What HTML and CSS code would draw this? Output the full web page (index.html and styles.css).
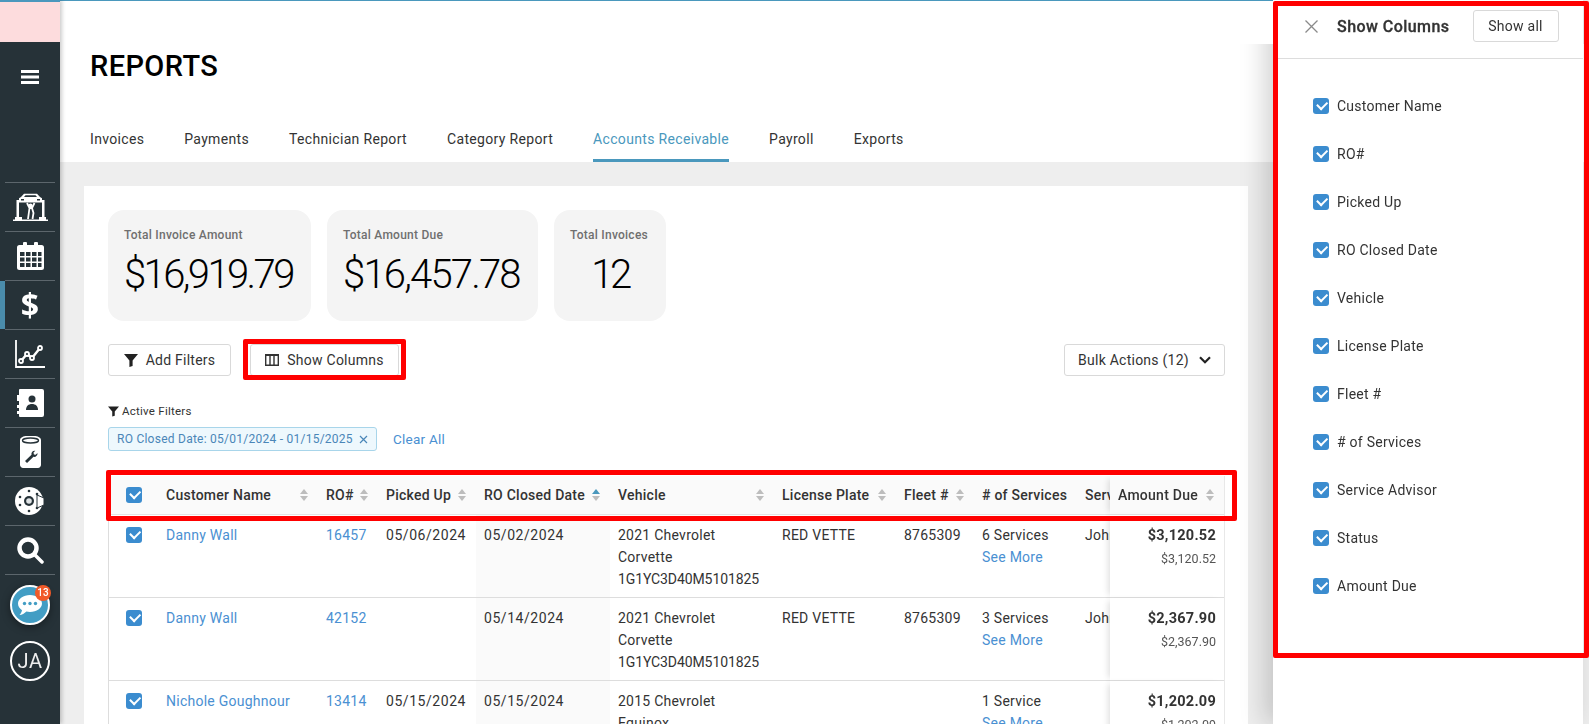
FILE: index.html
```html
<!DOCTYPE html>
<html lang="en">
<head>
<meta charset="utf-8">
<title>Reports</title>
<link rel="stylesheet" href="styles.css">
</head>
<body>
<aside class="sidebar">
  <div class="promo"></div>
  <div class="burger"><svg width="18" height="14" viewBox="0 0 18 14"><path fill="#fff" d="M0 0h18v3H0zM0 5.500h18v3H0zM0 11h18v3H0z"/></svg></div>
  <nav class="rail">
    <a class="rail-item"><svg width="35" height="28" viewBox="0 0 35 28"><path fill="#fff" d="M0 26.500h35V28H0zM2 24h7v2.500H2zM26 24h7v2.500h-7zM3.500 7h2.500v17H3.500zM29 7h2.500v17H29z"/><path fill="#fff" d="M8 4 11 .8h13L27 4l2 1.200V9.500H6V5.200z"/><path fill="#263238" d="M11 4l1.500-1.800h10L24 4zM8 6h3v1.500H8zM24 6h3v1.500h-3z"/><circle cx="17.500" cy="12.500" r="2" fill="#fff"/><path fill="none" stroke="#fff" stroke-width="1.800" d="M14 10l2.500 5h2.500l2.500-5M16.500 15l-1.500 11M19 15l1.500 5-1 6"/></svg></a>
    <a class="rail-item"><svg width="27" height="28" viewBox="0 0 27 28"><path fill="#fff" d="M2.500 3H6V1.500a2 2 0 0 1 4 0V3h7V1.500a2 2 0 0 1 4 0V3h3.500A2.500 2.500 0 0 1 27 5.500v20a2.500 2.500 0 0 1-2.500 2.500h-22A2.500 2.500 0 0 1 0 25.500v-20A2.500 2.500 0 0 1 2.500 3z"/><path fill="#263238" d="M3 10h4.500v4H3zM9 10h4.500v4H9zM15 10h4.500v4H15zM21 10h3.500v4H21zM3 15.500h4.500v4H3zM9 15.500h4.500v4H9zM15 15.500h4.500v4H15zM21 15.500h3.500v4H21zM3 21h4.500v4H3zM9 21h4.500v4H9zM15 21h4.500v4H15zM21 21h3.500v4H21z"/></svg></a>
    <a class="rail-item is-active"><span class="dollar">$</span></a>
    <a class="rail-item"><svg width="30" height="28" viewBox="0 0 30 28"><path fill="none" stroke="#fff" stroke-width="1.800" d="M1 0v27h29"/><path fill="none" stroke="#fff" stroke-width="2.400" d="M6 21l6-7 5 4 8-10"/><g fill="#263238" stroke="#fff" stroke-width="1.800"><circle cx="6" cy="21" r="2"/><circle cx="12" cy="14" r="2"/><circle cx="17" cy="18" r="2"/><circle cx="25" cy="8" r="2"/></g></svg></a>
    <a class="rail-item"><svg width="27" height="28" viewBox="0 0 27 28"><path fill="#fff" d="M3 0h22a2 2 0 0 1 2 2v24a2 2 0 0 1-2 2H3a1 1 0 0 1-1-1v-2H0v-3h2v-3H0v-3h2v-4H0v-3h2V9H0V6h2V1a1 1 0 0 1 1-1z"/><circle cx="15" cy="10" r="3.500" fill="#263238"/><path fill="#263238" d="M9 21c0-4 2.500-6 6-6s6 2 6 6z"/></svg></a>
    <a class="rail-item"><svg width="21" height="32" viewBox="0 0 21 32"><path fill="#fff" d="M0 4c0-6 21-6 21 0v25c0 1.500-1.500 3-3 3H3c-1.500 0-3-1.500-3-3z"/><ellipse cx="10.500" cy="4.500" rx="8" ry="2.500" fill="none" stroke="#263238" stroke-width="1.400"/><path fill="#263238" d="M5 25l6.500-6.200c-.5-2 1-4.300 3.800-4l-1.800 1.800.4 1.800 1.800.4 1.800-1.800c.3 2.800-2 4.300-4 3.800L7 27z"/></svg></a>
    <a class="rail-item"><svg width="30" height="28" viewBox="0 0 30 28"><circle cx="14" cy="14" r="14" fill="#fff"/><circle cx="14" cy="14" r="5" fill="#263238"/><circle cx="14" cy="14" r="2.800" fill="#dfe3e5"/><g fill="#263238"><circle cx="14" cy="4" r="1.300"/><circle cx="14" cy="24" r="1.300"/><circle cx="5" cy="10" r="1.300"/><circle cx="5" cy="18" r="1.300"/><circle cx="22" cy="7" r="1.300"/><circle cx="22" cy="21" r="1.300"/></g><path fill="#fff" stroke="#263238" d="M22 8l7 3v7l-7 3z"/></svg></a>
    <a class="rail-item"><svg width="27" height="27" viewBox="0 0 27 27"><circle cx="11" cy="11" r="8.500" fill="none" stroke="#fff" stroke-width="4.500"/><path stroke="#fff" stroke-width="3.500" stroke-linecap="round" d="M18 18l7 7"/></svg></a>
    <div class="rail-end"></div>
  </nav>
  <button class="chat"><svg width="24" height="21" viewBox="0 0 24 21"><path fill="#fff" d="M12 0c6.600 0 12 3.800 12 8.500S18.600 17 12 17c-1.300 0-2.500-.1-3.600-.4C6.500 18.500 4 20 1.500 20c1.300-1.300 2.200-3 2.500-4.800C1.500 13.600 0 11.200 0 8.500 0 3.800 5.400 0 12 0z"/><g fill="#429dc4"><circle cx="6.500" cy="8.500" r="1.700"/><circle cx="12" cy="8.500" r="1.700"/><circle cx="17.500" cy="8.500" r="1.700"/></g></svg><span class="chat-badge">13</span></button>
  <button class="avatar">JA</button>
</aside>

<main class="main">
  <div class="topbar"></div>
  <header class="page-head">
    <h1 class="page-title">REPORTS</h1>
    <nav class="tabs">
      <a class="tab">Invoices</a>
      <a class="tab">Payments</a>
      <a class="tab">Technician Report</a>
      <a class="tab">Category Report</a>
      <a class="tab is-active">Accounts Receivable</a>
      <a class="tab">Payroll</a>
      <a class="tab">Exports</a>
    </nav>
  </header>

  <section class="content">
    <div class="sheet">
      <div class="stats">
        <div class="stat stat-a"><div class="stat-label">Total Invoice Amount</div><div class="stat-value">$16,919.79</div></div>
        <div class="stat stat-b"><div class="stat-label">Total Amount Due</div><div class="stat-value">$16,457.78</div></div>
        <div class="stat stat-c"><div class="stat-label">Total Invoices</div><div class="stat-value stat-center">12</div></div>
      </div>

      <div class="toolbar">
        <button class="btn btn-filters"><svg class="funnel" width="14" height="13" viewBox="0 0 14 13"><path fill="#222" d="M0 0h14L8.600 6.500V12L5.400 13V6.500z"/></svg>Add Filters</button>
        <button class="btn btn-columns"><svg width="14" height="12" viewBox="0 0 14 12"><path fill="none" stroke="#333" stroke-width="1.400" d="M.7.700h12.600v10.600H.7zM5 .7v10.600M9 .7v10.600"/><path fill="#333" d="M0 0h14v2H0z"/></svg>Show Columns</button>
        <button class="btn btn-bulk">Bulk Actions (12)<svg width="12" height="8" viewBox="0 0 12 8"><path fill="none" stroke="#222" stroke-width="2.200" d="M1 1.200l5 5 5-5"/></svg></button>
      </div>

      <div class="active-label"><svg width="11" height="11" viewBox="0 0 14 13"><path fill="#222" d="M0 0h14L8.600 6.500V12L5.400 13V6.500z"/></svg>Active Filters</div>
      <div class="chips">
        <span class="chip">RO Closed Date: 05/01/2024 - 01/15/2025<svg width="9" height="9" viewBox="0 0 9 9"><path stroke="#4a86b8" stroke-width="1.200" d="M1 1l7 7M8 1L1 8"/></svg></span>
        <a class="clear-all">Clear All</a>
      </div>

      <div class="table-box">
        <div class="table-scroll">
          <table class="grid">
            <colgroup>
              <col class="c-check"><col class="c-name"><col class="c-ro"><col class="c-picked"><col class="c-closed"><col class="c-vehicle"><col class="c-plate"><col class="c-fleet"><col class="c-services"><col class="c-advisor"><col class="c-due">
            </colgroup>
            <thead>
              <tr>
                <th class="cell-check"><input class="cb" type="checkbox" checked></th>
                <th><div class="th-in">Customer Name<i class="sort"></i></div></th>
                <th><div class="th-in">RO#<i class="sort"></i></div></th>
                <th><div class="th-in">Picked Up<i class="sort"></i></div></th>
                <th><div class="th-in">RO Closed Date<i class="sort sort-up"></i></div></th>
                <th><div class="th-in">Vehicle<i class="sort"></i></div></th>
                <th><div class="th-in">License Plate<i class="sort"></i></div></th>
                <th><div class="th-in">Fleet #<i class="sort"></i></div></th>
                <th><div class="th-in">#&nbsp;of&nbsp;Services</div></th>
                <th><div class="th-in">Service&nbsp;Advisor</div></th>
                <th class="sticky"><div class="th-in">Amount Due<i class="sort"></i></div></th>
              </tr>
            </thead>
            <tbody>
              <tr>
                <td class="cell-check"><input class="cb" type="checkbox" checked></td>
                <td><a class="link">Danny Wall</a></td>
                <td><a class="link">16457</a></td>
                <td class="date">05/06/2024</td>
                <td class="date shaded">05/02/2024</td>
                <td>2021 Chevrolet<br>Corvette<br><span class="vin">1G1YC3D40M5101825</span></td>
                <td>RED VETTE</td>
                <td>8765309</td>
                <td>6 Services<br><a class="link">See More</a></td>
                <td>John Smith</td>
                <td class="sticky due"><b>$3,120.52</b><br><small>$3,120.52</small></td>
              </tr>
              <tr>
                <td class="cell-check"><input class="cb" type="checkbox" checked></td>
                <td><a class="link">Danny Wall</a></td>
                <td><a class="link">42152</a></td>
                <td class="date"></td>
                <td class="date shaded">05/14/2024</td>
                <td>2021 Chevrolet<br>Corvette<br><span class="vin">1G1YC3D40M5101825</span></td>
                <td>RED VETTE</td>
                <td>8765309</td>
                <td>3 Services<br><a class="link">See More</a></td>
                <td>John Smith</td>
                <td class="sticky due"><b>$2,367.90</b><br><small>$2,367.90</small></td>
              </tr>
              <tr>
                <td class="cell-check"><input class="cb" type="checkbox" checked></td>
                <td><a class="link">Nichole Goughnour</a></td>
                <td><a class="link">13414</a></td>
                <td class="date">05/15/2024</td>
                <td class="date shaded">05/15/2024</td>
                <td>2015 Chevrolet<br>Equinox<br><span class="vin">2GNALBEK5F6100000</span></td>
                <td></td>
                <td></td>
                <td>1 Service<br><a class="link">See More</a></td>
                <td></td>
                <td class="sticky due"><b>$1,202.09</b><br><small>$1,202.09</small></td>
              </tr>
            </tbody>
          </table>
        </div>
        <div class="mark-head"></div>
      </div>
    </div>
  </section>
</main>

<aside class="drawer">
  <div class="drawer-head">
    <svg class="drawer-x" width="13" height="13" viewBox="0 0 13 13"><path stroke="#8a8a8a" stroke-width="1.300" d="M.5.500l12 12M12.500.500l-12 12"/></svg>
    <h2 class="drawer-title">Show Columns</h2>
    <button class="btn btn-showall">Show all</button>
  </div>
  <ul class="col-list">
    <li><input class="cb" type="checkbox" checked>Customer Name</li>
    <li><input class="cb" type="checkbox" checked>RO#</li>
    <li><input class="cb" type="checkbox" checked>Picked Up</li>
    <li><input class="cb" type="checkbox" checked>RO Closed Date</li>
    <li><input class="cb" type="checkbox" checked>Vehicle</li>
    <li><input class="cb" type="checkbox" checked>License Plate</li>
    <li><input class="cb" type="checkbox" checked>Fleet #</li>
    <li><input class="cb" type="checkbox" checked># of Services</li>
    <li><input class="cb" type="checkbox" checked>Service Advisor</li>
    <li><input class="cb" type="checkbox" checked>Status</li>
    <li><input class="cb" type="checkbox" checked>Amount Due</li>
  </ul>
  <div class="mark-drawer"></div>
</aside>
</body>
</html>
```

FILE: styles.css
```css
* { box-sizing: border-box; }
html, body { height: 724px; margin: 0; overflow: hidden; }
body {
  display: flex;
  position: relative;
  font-family: Roboto, "Liberation Sans", sans-serif;
  font-size: 14px;
  letter-spacing: .25px;
  color: #333;
  background: #eee;
}
a { text-decoration: none; cursor: pointer; }
button { font: inherit; letter-spacing: inherit; color: inherit; cursor: pointer; }

/* sidebar */
.sidebar {
  width: 60px;
  flex: none;
  background: #263238;
  display: flex;
  flex-direction: column;
  align-items: center;
  box-shadow: 2px 0 4px rgba(0,0,0,.2);
  position: relative;
  z-index: 3;
}
.promo { width: 60px; height: 42px; flex: none; background: #fddcdd; border-top: 2px solid #4a98bd; }
.burger { height: 14px; flex: none; margin-top: 28px; display: flex; }
.rail { width: 50px; flex: none; margin-top: 98px; display: flex; flex-direction: column; }
.rail-item {
  height: 49px;
  flex: none;
  border-top: 1px solid #5c666c;
  display: flex;
  align-items: center;
  justify-content: center;
  position: relative;
}
.rail-item.is-active::before {
  content: "";
  position: absolute;
  left: -5px; top: 0; bottom: 0;
  width: 5px;
  background: #4a8cab;
}
.rail-end { border-top: 1px solid #5c666c; }
.dollar {
  font-family: "Open Sans", sans-serif;
  font-weight: 700;
  font-size: 32px;
  line-height: 1;
  color: #fff;
  letter-spacing: 0;
}
.chat {
  width: 40px; height: 40px;
  flex: none;
  margin-top: 10px;
  border-radius: 50%;
  border: 2px solid #fff;
  background: #429dc4;
  display: flex; align-items: center; justify-content: center;
  padding: 0;
  position: relative;
  box-shadow: 0 2px 8px rgba(0,0,0,.4);
}
.chat-badge {
  position: absolute;
  top: -2px; right: -3px;
  width: 16px; height: 16px;
  border-radius: 50%;
  background: #f15a29;
  color: #fff;
  font-size: 10px;
  font-weight: 500;
  letter-spacing: 0;
  line-height: 16px;
  text-align: center;
}
.avatar {
  width: 40px; height: 40px;
  flex: none;
  margin-top: 16px;
  border-radius: 50%;
  border: 2px solid #fff;
  background: transparent;
  color: #eee;
  font-size: 20px;
  letter-spacing: .5px;
  padding: 0;
}

/* main */
.main { flex: 1; min-width: 0; display: flex; flex-direction: column; }
.topbar {
  height: 44px;
  flex: none;
  margin-right: 316px;
  background: #fff;
  border-top: 1px solid #4a98bd;
  position: relative;
  z-index: 2;
}
.page-head { flex: none; background: #fff; padding-left: 30px; }
.page-title {
  margin: 0 0 28px;
  font-size: 29px;
  line-height: 44px;
  font-weight: 500;
  color: #000;
  letter-spacing: .4px;
}
.tabs { display: flex; gap: 40px; height: 46px; letter-spacing: .33px; }
.tab {
  color: #333;
  padding-top: 3px;
  border-bottom: 3px solid transparent;
  display: flex;
  align-items: center;
}
.tab.is-active { color: #4a98bd; border-bottom-color: #4a98bd; }

.content { flex: none; padding: 24px 341px 0 24px; }
.sheet { background: #fff; padding: 24px 23px 0 24px; height: 600px; }

.stats { display: flex; gap: 16px; }
.stat { height: 111px; border-radius: 16px; background: #f4f4f4; padding: 17px 16px 0; }
.stat-a { width: 203px; }
.stat-b { width: 211px; }
.stat-c { width: 112px; }
.stat-label { font-size: 12px; line-height: 16px; font-weight: 500; color: #6f6f6f; white-space: nowrap; }
.stat-value {
  margin-top: 8px;
  font-size: 40px;
  line-height: 48px;
  font-weight: 300;
  color: #000;
  white-space: nowrap;
}
.stat-a .stat-value { letter-spacing: -2.6px; }
.stat-b .stat-value { letter-spacing: -1.8px; }
.stat-c .stat-value { letter-spacing: -3.5px; }
.stat-center { text-align: center; }

.toolbar { display: flex; align-items: center; gap: 19px; margin-top: 23px; }
.btn {
  height: 32px;
  background: #fff;
  border: 1px solid #d9d9d9;
  border-radius: 3px;
  display: inline-flex;
  align-items: center;
  justify-content: center;
  white-space: nowrap;
  padding: 0;
}
.btn-filters { width: 123px; gap: 8px; }
.btn-columns { width: 149px; gap: 8px; position: relative; }
.btn-columns::after {
  content: "";
  position: absolute;
  inset: -6px -8px -5px -8px;
  border: 5px solid #f00;
  border-radius: 2px;
  pointer-events: none;
}
.btn-bulk { width: 161px; gap: 10px; margin-left: auto; }

.active-label {
  margin-top: 28px;
  font-size: 11.5px;
  line-height: 14px;
  display: flex;
  align-items: center;
  gap: 3px;
}
.chips { display: flex; align-items: center; gap: 16px; margin-top: 9px; }
.chip {
  height: 24px;
  width: 269px;
  padding: 0 8px;
  background: #eef8fd;
  border: 1px solid #a8d5ea;
  border-radius: 3px;
  color: #4a86b8;
  font-size: 12px;
  display: inline-flex;
  align-items: center;
  justify-content: space-between;
  white-space: nowrap;
}
.clear-all { color: #4a90d2; font-size: 13.5px; }

.table-box { position: relative; margin-top: 25px; }
.table-scroll { overflow: hidden; border-left: 1px solid #ddd; border-right: 1px solid #e8e8e8; }
.grid { border-collapse: separate; border-spacing: 0; table-layout: fixed; width: 1232px; }
.c-check { width: 49px; } .c-name { width: 160px; } .c-ro { width: 60px; }
.c-picked { width: 98px; } .c-closed { width: 134px; } .c-vehicle { width: 164px; }
.c-plate { width: 122px; } .c-fleet { width: 78px; } .c-services { width: 103px; }
.c-advisor { width: 150px; } .c-due { width: 114px; }

th {
  height: 39px;
  background: #fafafa;
  border-bottom: 1px solid #e3e3e3;
  padding: 0 10px 0 8px;
  font-weight: 500;
  font-size: 14px;
  color: #333;
  text-align: left;
  white-space: nowrap;
  overflow: hidden;
}
.th-in { display: flex; align-items: center; justify-content: space-between; gap: 4px; }
.sort { display: inline-flex; flex-direction: column; gap: 2px; flex: none; }
.sort::before, .sort::after {
  content: "";
  width: 0; height: 0;
  border-left: 4px solid transparent;
  border-right: 4px solid transparent;
}
.sort::before { border-bottom: 5px solid #bdbdbd; }
.sort::after { border-top: 5px solid #bdbdbd; }
.sort-up::before { border-bottom-color: #4a98bd; }

td {
  height: 83px;
  padding: 9px 8px 0;
  vertical-align: top;
  line-height: 22px;
  border-bottom: 1px solid #ddd;
  white-space: nowrap;
  overflow: hidden;
}
th.cell-check { padding: 0 0 0 17px; vertical-align: middle; }
td.cell-check { padding: 12px 0 0 17px; }
.shaded { background: #fafafa; }
.link { color: #4a90d2; }
.date { letter-spacing: .55px; }
.vin { letter-spacing: -.1px; }
.sticky {
  position: sticky;
  right: 0;
  background: #fff;
  box-shadow: -5px 0 6px -3px rgba(0,0,0,.12);
}
th.sticky { background: #fafafa; }
.due { text-align: right; padding-right: 8px; }
.due b { font-weight: 700; font-size: 14.5px; }
.due small { font-size: 12.5px; color: #555; letter-spacing: 0; }

.cb {
  appearance: none;
  -webkit-appearance: none;
  width: 16px; height: 16px;
  margin: 0;
  border-radius: 3px;
  background: #3b8ccf;
  position: relative;
  display: inline-block;
  vertical-align: top;
}
.cb::after {
  content: "";
  position: absolute;
  left: 3.500px; top: 3px;
  width: 8px; height: 4.500px;
  border-left: 2px solid #fff;
  border-bottom: 2px solid #fff;
  transform: rotate(-45deg);
}

.mark-head {
  position: absolute;
  left: -2px; top: -6px;
  width: 1131px; height: 51px;
  border: 5px solid #f00;
  border-radius: 2px;
  pointer-events: none;
}

/* drawer */
.drawer {
  position: absolute;
  left: 1273px; top: 0;
  width: 310px; height: 724px;
  background: #fff;
  box-shadow: -8px 0 24px rgba(0,0,0,.18);
  z-index: 1;
}
.drawer-head {
  height: 59px;
  border-bottom: 1px solid #ddd;
  display: flex;
  align-items: center;
  padding: 0 0 6px 32px;
}
.drawer-x { flex: none; }
.drawer-title { margin: 0 0 0 19px; font-size: 16px; font-weight: 500; letter-spacing: .45px; color: #333; white-space: nowrap; -webkit-text-stroke: .3px #333; }
.btn-showall { width: 86px; height: 32px; margin-left: 23px; }
.col-list { list-style: none; margin: 23px 0 0; padding: 0 0 0 40px; }
.col-list li { height: 48px; display: flex; align-items: center; gap: 8px; }
.mark-drawer {
  position: absolute;
  left: 0; top: 1px;
  width: 316px; height: 657px;
  border: 5px solid #f00;
  border-radius: 2px;
  pointer-events: none;
}
```
